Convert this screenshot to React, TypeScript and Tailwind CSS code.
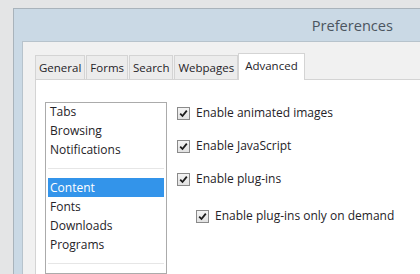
const tabs = ["General", "Forms", "Search", "Webpages"];

const Check = () => (
  <span className="flex h-[13px] w-[13px] shrink-0 items-center justify-center border border-[#8a8a8a] bg-gradient-to-b from-[#f4f4f4] to-[#e2e2e2]">
    <svg width="9" height="9" viewBox="0 0 9 9">
      <path d="M1.2 4.6 L3.5 7 L7.8 1.6" fill="none" stroke="#1c1c1c" strokeWidth="1.8" />
    </svg>
  </span>
);

const Option = ({ label, nested }: { label: string; nested?: boolean }) => (
  <div className={`flex items-center gap-[6px] ${nested ? "pl-[19px]" : ""}`}>
    <Check />
    <span>{label}</span>
  </div>
);

export default function App() {
  return (
    <div
      className="flex h-[274px] w-[420px] overflow-hidden bg-[#e4e5e6] pl-[13px] pt-[8px] text-[12px] text-[#252328]"
      style={{ fontFamily: '"Open Sans", sans-serif' }}
    >
      <div className="flex flex-1 flex-col border-l border-t border-[#a9b3bb] bg-[#cad9e5]">
        <div className="flex h-[32px] shrink-0 items-center justify-end pr-[27px] pt-[2px] text-[14.6px] text-[#4b5560]">
          Preferences
        </div>
        <div className="ml-[8px] flex flex-1 flex-col border-l border-t border-[#b7c3cc] bg-[#f1f1f1] pl-[12px] pt-[11px]">
          <div className="flex items-end gap-px text-[11.5px]">
            {tabs.map((t) => (
              <div
                key={t}
                className="flex h-[24px] items-center border border-b-0 border-[#d4d4d4] bg-[#ececec] px-[3px] leading-none"
              >
                {t}
              </div>
            ))}
            <div className="relative z-10 -mb-px -ml-px flex h-[27px] items-center border border-b-0 border-[#d4d4d4] bg-white px-[6px] pb-[2px] leading-none">
              Advanced
            </div>
          </div>
          <div className="flex flex-1 border-l border-t border-[#d4d4d4] bg-white pl-[9px] pt-[22px]">
            <div className="flex w-[122px] flex-col border border-[#ababab] px-[2px] leading-[19px]">
              <div className="-mt-px px-[2px]">Tabs</div>
              <div className="px-[2px]">Browsing</div>
              <div className="px-[2px]">Notifications</div>
              <div className="my-[9px] h-px bg-[#e6e6e6]" />
              <div className="bg-[#3394ea] px-[2px] text-white">Content</div>
              <div className="px-[2px]">Fonts</div>
              <div className="px-[2px]">Downloads</div>
              <div className="px-[2px]">Programs</div>
              <div className="my-[9px] h-px bg-[#e6e6e6]" />
            </div>
            <div className="flex flex-col gap-[19px] pl-[10px] pt-[4px] leading-[14px]">
              <Option label="Enable animated images" />
              <Option label="Enable JavaScript" />
              <Option label="Enable plug-ins" />
              <div className="pt-[4px]">
                <Option label="Enable plug-ins only on demand" nested />
              </div>
            </div>
          </div>
        </div>
      </div>
    </div>
  );
}
